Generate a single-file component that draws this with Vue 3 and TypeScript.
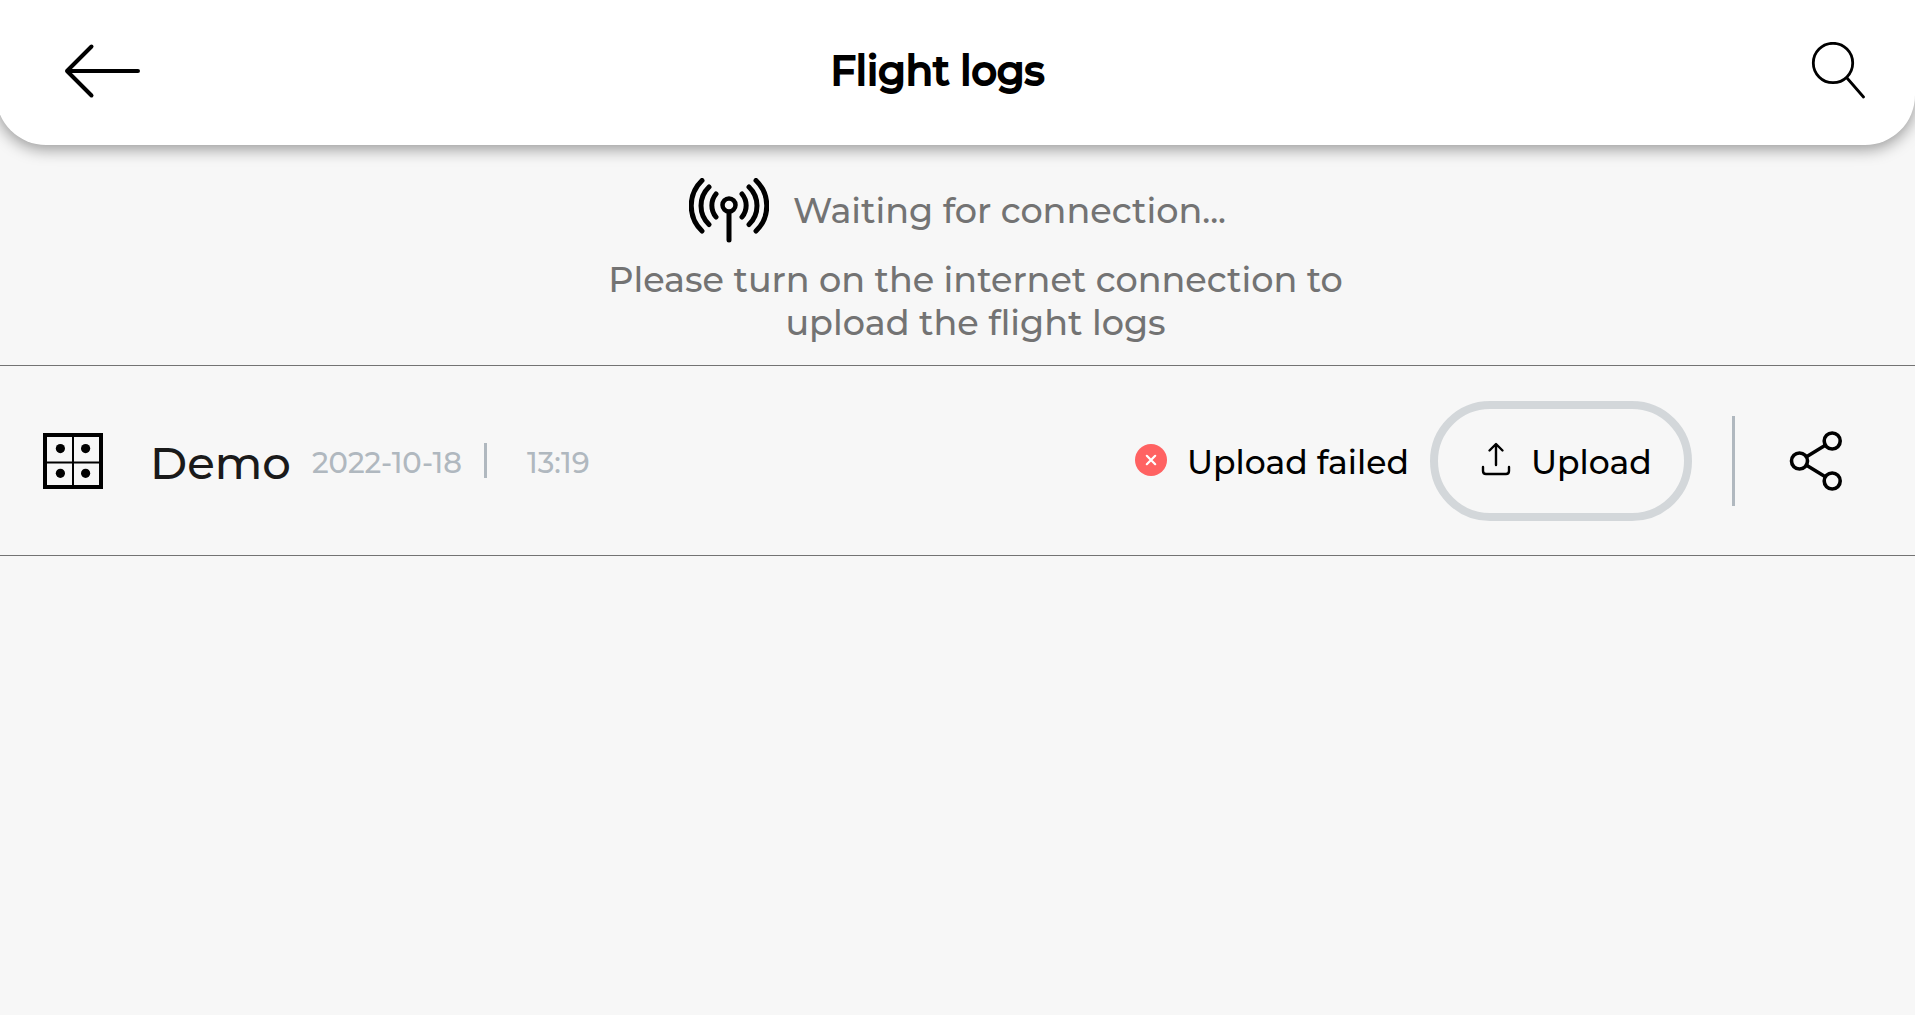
<script setup lang="ts">
import { ref } from 'vue'

interface FlightLog {
  name: string
  date: string
  time: string
  status: string
}

const logs = ref<FlightLog[]>([
  { name: 'Demo', date: '2022-10-18', time: '13:19', status: 'Upload failed' },
])
</script>

<template>
  <div class="page">
    <header class="topbar">
      <button class="icon-button" type="button" aria-label="Back">
        <svg width="76" height="56" viewBox="0 0 76 56" fill="none" stroke="#000" stroke-width="4" stroke-linecap="round" stroke-linejoin="round">
          <path d="M74 28H3M27.500 3.500L3 28L27.500 52.500" />
        </svg>
      </button>
      <h1>Flight logs</h1>
      <button class="icon-button" type="button" aria-label="Search">
        <svg width="54" height="58" viewBox="0 0 54 58" fill="none" stroke="#000" stroke-width="2.800" stroke-linecap="round">
          <circle cx="22" cy="21" r="19.700" />
          <path d="M36 36L52.500 55" />
        </svg>
      </button>
    </header>

    <main>
      <section class="notice">
        <div class="waiting">
          <svg width="80" height="66" viewBox="0 0 80 66" fill="none" stroke="#000" stroke-width="5" stroke-linecap="round">
            <circle cx="40" cy="27" r="6.500" stroke-width="4.500" />
            <path d="M40 35V62" />
            <path d="M27 16A18 18 0 0 0 27 39M20 9A26 26 0 0 0 20 46.500M13 2.500A35 35 0 0 0 13 53" />
            <path d="M53 16A18 18 0 0 1 53 39M60 9A26 26 0 0 1 60 46.500M67 2.500A35 35 0 0 1 67 53" />
          </svg>
          <span>Waiting for connection...</span>
        </div>
        <p>Please turn on the internet connection to upload the flight logs</p>
      </section>

      <ul class="logs">
        <li v-for="log in logs" :key="log.date + log.time" class="log">
          <svg class="grid-icon" width="60" height="56" viewBox="0 0 60 56" fill="none" stroke="#000">
            <path d="M2 2H58V54H2Z" stroke-width="4" />
            <path d="M30 3V53M3 29.500H57" stroke-width="2" />
            <g fill="#000" stroke="none">
              <circle cx="17.400" cy="15.600" r="4.600" />
              <circle cx="42.600" cy="15.600" r="4.600" />
              <circle cx="17.400" cy="40.300" r="4.600" />
              <circle cx="42.600" cy="40.300" r="4.600" />
            </g>
          </svg>
          <span class="name">{{ log.name }}</span>
          <span class="date">{{ log.date }}</span>
          <span class="tick"></span>
          <span class="time">{{ log.time }}</span>

          <svg class="failed-icon" width="32" height="32" viewBox="0 0 32 32">
            <circle cx="16" cy="16" r="16" fill="#ff6262" />
            <path d="M11.800 11.800L20.200 20.200M20.200 11.800L11.800 20.200" stroke="#fff" stroke-width="2.200" stroke-linecap="round" />
          </svg>
          <span class="status">{{ log.status }}</span>
          <button class="upload" type="button">
            <svg width="30" height="34" viewBox="0 0 30 34" fill="none" stroke="#000" stroke-width="2.400" stroke-linecap="round" stroke-linejoin="round">
              <path d="M15 23V3M8.500 8.500L15 2L21.500 8.500" />
              <path d="M2 25V29Q2 32 5 32H25Q28 32 28 29V25" />
            </svg>
            <span>Upload</span>
          </button>
          <span class="divider"></span>
          <button class="icon-button" type="button" aria-label="Share">
            <svg width="54" height="60" viewBox="0 0 54 60" fill="none" stroke="#000" stroke-width="3.600">
              <circle cx="10.500" cy="30" r="8" />
              <circle cx="43.200" cy="10" r="8" />
              <circle cx="43.200" cy="50" r="8" />
              <path d="M17.500 25.700L36.300 14.300M17.500 34.300L36.300 45.700" />
            </svg>
          </button>
        </li>
      </ul>
    </main>
  </div>
</template>

<style>
body {
  margin: 0;
  background: #f7f7f7;
}
</style>

<style scoped>
.page {
  min-height: 100vh;
  overflow-x: hidden;
  background: #f7f7f7;
  color: #000;
  font-family: Montserrat, Inter, sans-serif;
  font-weight: 500;
}

button {
  margin: 0;
  font: inherit;
  color: inherit;
  background: none;
  cursor: pointer;
}

svg {
  display: block;
  flex: none;
}

.icon-button {
  padding: 0;
  border: 0;
}

.topbar {
  display: flex;
  align-items: center;
  justify-content: space-between;
  box-sizing: border-box;
  height: 145px;
  margin-left: -4px;
  padding: 0 50px 4px 68px;
  border-radius: 0 0 50px 50px;
  background: #fff;
  box-shadow: 0 4px 16px rgba(0, 0, 0, 0.4);
}

h1 {
  margin: 0 76px 0 0;
  font-size: 40px;
  line-height: 52px;
  font-weight: 500;
  -webkit-text-stroke: 2px #000;
  paint-order: stroke fill;
}

.notice {
  display: flex;
  flex-direction: column;
  align-items: center;
  padding: 33px 0 21px;
  color: #737373;
  font-size: 35px;
  line-height: 43px;
}

.waiting {
  display: flex;
  align-items: center;
  gap: 24px;
}

.waiting span {
  padding-bottom: 2px;
}

.notice p {
  width: 760px;
  margin: 14px 0 0 36px;
  text-align: center;
}

.logs {
  margin: 0;
  padding: 0;
  list-style: none;
  border-top: 1px solid #737373;
}

.log {
  display: flex;
  align-items: center;
  height: 189px;
  padding: 0 72px 0 43px;
  border-bottom: 1px solid #737373;
  white-space: nowrap;
}

.name,
.date,
.time {
  padding-top: 4px;
}

.name {
  width: 162px;
  margin-left: 47px;
  color: #1a1a1a;
  font-size: 45px;
}

.date,
.time {
  color: #b0b8bf;
  font-size: 29px;
}

.date {
  width: 172px;
}

.tick {
  width: 3px;
  height: 35px;
  background: #b0b8bf;
}

.time {
  margin-left: 40px;
}

.failed-icon {
  margin-bottom: 2px;
  margin-left: auto;
}

.status {
  width: 243px;
  margin-left: 20px;
  padding-top: 2px;
  font-size: 33px;
}

.upload {
  display: flex;
  align-items: center;
  gap: 20px;
  box-sizing: border-box;
  width: 262px;
  height: 120px;
  padding: 0 0 0 43px;
  border: 8px solid #d3d7da;
  border-radius: 60px;
  font-size: 33px;
}

.upload svg {
  margin-bottom: 4px;
}

.upload span {
  padding-top: 2px;
}

.divider {
  width: 3px;
  height: 90px;
  margin: 0 54px 0 40px;
  background: #b0b8bf;
}
</style>
